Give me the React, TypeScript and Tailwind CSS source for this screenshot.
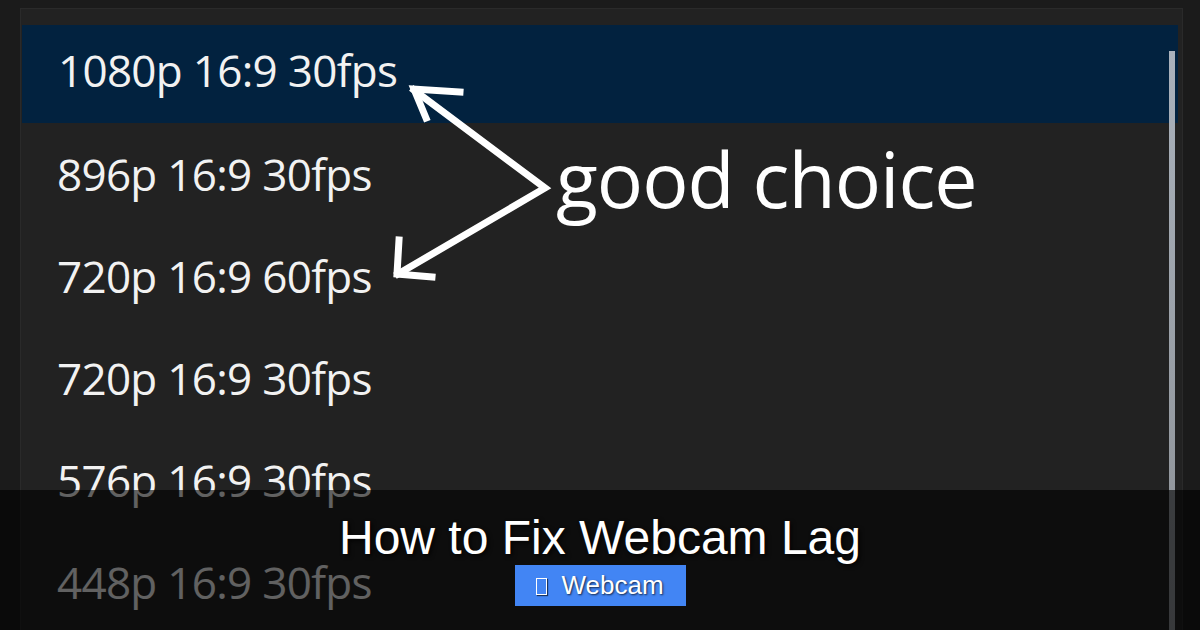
import React from "react";

const MODES = [
  "1080p 16:9 30fps",
  "896p 16:9 30fps",
  "720p 16:9 60fps",
  "720p 16:9 30fps",
  "576p 16:9 30fps",
  "448p 16:9 30fps",
];

function Arrows() {
  return (
    <svg
      className="absolute left-0 top-0 pointer-events-none"
      width="1200"
      height="630"
      viewBox="0 0 1200 630"
      fill="none"
      stroke="#ffffff"
      strokeWidth="7"
      strokeLinecap="square"
      strokeLinejoin="miter"
    >
      {/* bent double arrow pointing at the two good rows */}
      <polyline points="414,90 545,188 398,274" />
      <polyline points="460,92 414,89 426,118" />
      <polyline points="399,240 397,274 432,277" />
    </svg>
  );
}

export default function App() {
  return (
    <div className="relative w-[1200px] h-[630px] overflow-hidden bg-[#1b1b1b]">
      <div className="relative ml-[20px] mt-[8px] w-[1163px] h-[640px] bg-[#222222] border-l border-t border-r border-[#2a2a2a] pt-[16px]">
        <div className="flex flex-col">
          {MODES.map((mode, i) => (
            <div
              key={mode + i}
              className={
                i === 0
                  ? "h-[98px] mb-[4px] mx-[1px] mr-[4px] flex items-center pl-[36px] pb-[8px] bg-[#02223f]"
                  : "h-[102px] flex items-center pl-[36px] pb-[8px]"
              }
            >
              <span className="font-['Open_Sans',sans-serif] text-[44px] text-[#f2f2f2] tracking-[-0.7px]">
                {mode}
              </span>
            </div>
          ))}
        </div>
        {/* scrollbar thumb */}
        <div className="absolute left-[1148px] top-[42px] w-[6px] h-[600px] bg-gradient-to-b from-[#aab2bc] to-[#8a8e93]" />
      </div>

      <Arrows />
      <span className="absolute left-[556px] top-[140px] font-['Open_Sans',sans-serif] text-[77px] leading-none text-white tracking-[-1px]">
        good choice
      </span>

      <div className="absolute left-0 bottom-0 w-full h-[140px] bg-black/60 flex flex-col items-center pt-[22px]">
        <h1 className="font-['Liberation_Sans',Arial,sans-serif] text-[48px] leading-[52px] text-white [text-shadow:2px_2px_4px_rgba(0,0,0,0.8)]">
          How to Fix Webcam Lag
        </h1>
        <div className="mt-[1px] h-[41px] w-[171px] bg-[#4285f4] flex items-center justify-center gap-[14px] font-['Liberation_Sans',Arial,sans-serif] text-[26px] text-white [text-shadow:1px_1px_2px_rgba(0,0,0,0.7)]">
          {/* missing-glyph box before the label */}
          <span className="block w-[11px] h-[17px] mt-[2px] border-[1.5px] border-white shadow-[1px_1px_1px_rgba(0,0,0,0.6)]" />
          <span>Webcam</span>
        </div>
      </div>
    </div>
  );
}
